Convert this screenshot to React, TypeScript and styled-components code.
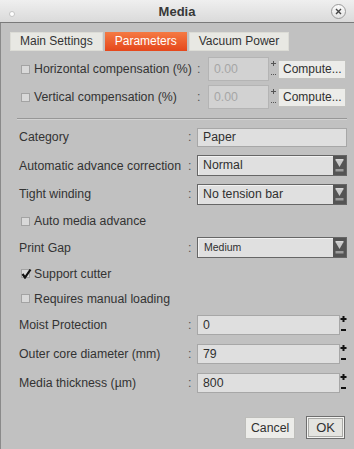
import React from "react";
import styled, { createGlobalStyle } from "styled-components";

const Global = createGlobalStyle`
  html, body { margin: 0; padding: 0; background: #c1c1c1; }
  body {
    font-family: "Liberation Sans", Arial, sans-serif;
    font-size: 12.3px;
    color: #303030;
  }
`;

const Window = styled.div`
  width: 354px;
  height: 449px;
  box-sizing: border-box;
  display: flex;
  flex-direction: column;
  background: #c1c1c1;
  box-shadow: inset 1px 0 0 #8a8a8a;
  overflow: hidden;
`;

const TitleBar = styled.div`
  height: 22px;
  flex: 0 0 22px;
  display: grid;
  grid-template-columns: 24px 1fr 24px;
  align-items: center;
  background: linear-gradient(#efefef, #dadada);
  border-bottom: 1px solid #7a7a7a;
`;

const Title = styled.div`
  text-align: center;
  font-weight: bold;
  font-size: 13px;
  color: #383838;
  padding-top: 1px;
`;

const MenuDot = styled.span`
  justify-self: center;
  width: 4px;
  height: 4px;
  margin-top: 5px;
  border-radius: 50%;
  background: #ffffff;
  border: 1px solid #c4c4c4;
`;

const CloseButton = styled.span`
  justify-self: start;
  margin-left: 1px;
  width: 13px;
  height: 13px;
  border-radius: 50%;
  border: 1px solid #9a9a9a;
  background: linear-gradient(#fbfbfb, #e4e4e4);
  display: flex;
  align-items: center;
  justify-content: center;
`;

const TabRow = styled.div`
  display: flex;
  gap: 2px;
  padding: 9px 10px 0;
`;

const Tab = styled.div<{ $active?: boolean }>`
  height: 19px;
  line-height: 19px;
  padding: 0 10px;
  font-size: 12px;
  color: ${(p) => (p.$active ? "#ffffff" : "#333333")};
  background: ${(p) =>
    p.$active ? "linear-gradient(#f57a43, #e5471b)" : "#e8e8e3"};
  box-shadow: ${(p) => (p.$active ? "none" : "inset 0 0 0 1px #dcdcd6")};
`;

const CompGrid = styled.div`
  display: grid;
  grid-template-columns: 1fr 16px 61px 9px 68px;
  grid-template-rows: 28px 28px;
  align-items: center;
  padding: 4px 8px 0 20px;
`;

const CheckLabel = styled.label<{ $span?: boolean }>`
  display: flex;
  align-items: center;
  gap: 4px;
  color: #333333;
  white-space: nowrap;
  padding-left: ${(p) => (p.$span ? "1px" : "0")};
  grid-column: ${(p) => (p.$span ? "1 / -1" : "auto")};
`;

const Box = styled.span`
  width: 7px;
  height: 7px;
  margin-left: 1px;
  border: 1px solid #a3a3a3;
  background: #d9d9d9;
  position: relative;
  flex: 0 0 auto;
`;

const Tick = styled.svg`
  position: absolute;
  left: -1px;
  top: -2px;
`;

const Colon = styled.span<{ $offset?: number }>`
  color: #555555;
  padding-left: ${(p) => p.$offset ?? 2}px;
`;

const DisabledInput = styled.div`
  height: 24px;
  box-sizing: border-box;
  border: 1px solid #b4b4b4;
  background: #d2d2d2;
  color: #a6a6a6;
  line-height: 22px;
  padding-left: 5px;
`;

const SmallSpin = styled.div`
  height: 18px;
  display: flex;
  align-items: center;
  justify-content: center;
`;

const ComputeButton = styled.button`
  height: 19px;
  padding: 0 4px;
  font-family: inherit;
  font-size: 12px;
  color: #303030;
  background: #ecece9;
  border: 1px solid #c3c3c0;
  border-radius: 0;
  text-align: center;
  margin: 0;
`;

const Separator = styled.div`
  margin: 7px 7px 0 17px;
  border-top: 1px solid #979797;
  border-bottom: 1px solid #d2d2d2;
`;

const FormGrid = styled.div`
  display: grid;
  grid-template-columns: 1fr 11px 150px;
  grid-template-rows: 28px 29px 28px 26px 27px 25px 25px 28px 29px 29px;
  align-items: center;
  padding: 3px 7px 0 19px;
`;

const Label = styled.span`
  color: #333333;
  white-space: nowrap;
`;

const TextField = styled.div`
  height: 19px;
  box-sizing: border-box;
  border: 1px solid #a7a7a7;
  background: #dfdfdf;
  line-height: 17px;
  padding-left: 5px;
  color: #303030;
`;

const SelectBox = styled.div`
  height: 21px;
  box-sizing: border-box;
  border: 1px solid #666666;
  box-shadow: inset 1px 1px 0 #f2f2f2;
  background: #e0e0e0;
  display: flex;
  align-items: stretch;
`;

const SelectText = styled.span<{ $small?: boolean }>`
  flex: 1;
  padding-left: ${(p) => (p.$small ? "6px" : "5px")};
  font-size: ${(p) => (p.$small ? "10.5px" : "12.3px")};
  line-height: 19px;
  color: #303030;
`;

const ArrowButton = styled.span`
  width: 13px;
  background: #545454;
  display: flex;
  align-items: center;
  justify-content: center;
`;

const SpinField = styled.div`
  display: flex;
  align-items: center;
`;

const SpinInput = styled(TextField)`
  width: 143px;
  height: 20px;
  line-height: 18px;
`;

const SpinButtons = styled.div`
  width: 7px;
  height: 20px;
  display: flex;
  justify-content: center;
`;

const Footer = styled.div`
  display: flex;
  justify-content: flex-end;
  align-items: center;
  gap: 11px;
  padding: 19px 9px 0 0;
`;

const DialogButton = styled.button<{ $default?: boolean }>`
  height: ${(p) => (p.$default ? "23px" : "22px")};
  padding: ${(p) => (p.$default ? "0 9px" : "0 5px")};
  margin: 0;
  font-family: inherit;
  font-size: ${(p) => (p.$default ? "13px" : "12.3px")};
  color: #303030;
  border-radius: 0;
  background: ${(p) => (p.$default ? "#e4e4e0" : "#ecece9")};
  border: 1px solid ${(p) => (p.$default ? "#6e6e6e" : "#bdbdba")};
  box-shadow: ${(p) =>
    p.$default ? "inset 0 0 0 1px #f4f4f2, inset 0 0 0 2px #a9a9a6" : "none"};
`;

const Check = ({ checked }: { checked?: boolean }) => (
  <Box>
    {checked && (
      <Tick width="11" height="11" viewBox="0 0 11 11">
        <path d="M1.5 6 L4 9.5 L9.5 1.5" fill="none" stroke="#111" strokeWidth="2.2" />
      </Tick>
    )}
  </Box>
);

const Arrow = () => (
  <ArrowButton>
    <svg width="11" height="17" viewBox="0 0 11 17">
      <path d="M1.5 3 H9.5 L5.5 10 Z" fill="#c9c9c9" />
      <rect x="1.5" y="2" width="8" height="1.3" fill="#d8d8d8" />
      <rect x="1.5" y="12" width="8" height="2.5" fill="#9c9c9c" />
    </svg>
  </ArrowButton>
);

const TinySpin = () => (
  <SmallSpin>
    <svg width="7" height="18" viewBox="0 0 7 18">
      <rect x="3" y="1" width="1" height="5" fill="#555" />
      <rect x="1" y="3" width="5" height="1" fill="#555" />
      <rect x="1" y="14" width="1" height="1" fill="#555" />
      <rect x="3" y="14" width="1" height="1" fill="#555" />
      <rect x="5" y="14" width="1" height="1" fill="#555" />
    </svg>
  </SmallSpin>
);

const PlusMinus = () => (
  <SpinButtons>
    <svg width="7" height="20" viewBox="0 0 7 20">
      <rect x="2.5" y="1" width="2" height="6" fill="#111" />
      <rect x="0.5" y="3" width="6" height="2" fill="#111" />
      <rect x="1" y="14" width="5" height="2" fill="#111" />
    </svg>
  </SpinButtons>
);

type Row =
  | { kind: "text"; label: string; value: string }
  | { kind: "select"; label: string; value: string; small?: boolean }
  | { kind: "check"; label: string; checked?: boolean }
  | { kind: "spin"; label: string; value: string };

const rows: Row[] = [
  { kind: "text", label: "Category", value: "Paper" },
  { kind: "select", label: "Automatic advance correction", value: "Normal" },
  { kind: "select", label: "Tight winding", value: "No tension bar" },
  { kind: "check", label: "Auto media advance" },
  { kind: "select", label: "Print Gap", value: "Medium", small: true },
  { kind: "check", label: "Support cutter", checked: true },
  { kind: "check", label: "Requires manual loading" },
  { kind: "spin", label: "Moist Protection", value: "0" },
  { kind: "spin", label: "Outer core diameter (mm)", value: "79" },
  { kind: "spin", label: "Media thickness (µm)", value: "800" },
];

export default function App() {
  return (
    <>
      <Global />
      <Window>
        <TitleBar>
          <MenuDot />
          <Title>Media</Title>
          <CloseButton>
            <svg width="7" height="7" viewBox="0 0 7 7">
              <path d="M1 1 L6 6 M6 1 L1 6" stroke="#444" strokeWidth="1.4" />
            </svg>
          </CloseButton>
        </TitleBar>

        <TabRow>
          <Tab>Main Settings</Tab>
          <Tab $active>Parameters</Tab>
          <Tab>Vacuum Power</Tab>
        </TabRow>

        <CompGrid>
          {["Horizontal compensation (%)", "Vertical compensation (%)"].map((l) => (
            <React.Fragment key={l}>
              <CheckLabel>
                <Check />
                {l}
              </CheckLabel>
              <Colon $offset={5}>:</Colon>
              <DisabledInput>0.00</DisabledInput>
              <TinySpin />
              <ComputeButton>Compute...</ComputeButton>
            </React.Fragment>
          ))}
        </CompGrid>

        <Separator />

        <FormGrid>
          {rows.map((r) => {
            if (r.kind === "check") {
              return (
                <CheckLabel key={r.label} $span>
                  <Check checked={r.checked} />
                  {r.label}
                </CheckLabel>
              );
            }
            return (
              <React.Fragment key={r.label}>
                <Label>{r.label}</Label>
                <Colon>:</Colon>
                {r.kind === "text" && <TextField>{r.value}</TextField>}
                {r.kind === "select" && (
                  <SelectBox>
                    <SelectText $small={r.small}>{r.value}</SelectText>
                    <Arrow />
                  </SelectBox>
                )}
                {r.kind === "spin" && (
                  <SpinField>
                    <SpinInput>{r.value}</SpinInput>
                    <PlusMinus />
                  </SpinField>
                )}
              </React.Fragment>
            );
          })}
        </FormGrid>

        <Footer>
          <DialogButton>Cancel</DialogButton>
          <DialogButton $default>OK</DialogButton>
        </Footer>
      </Window>
    </>
  );
}
